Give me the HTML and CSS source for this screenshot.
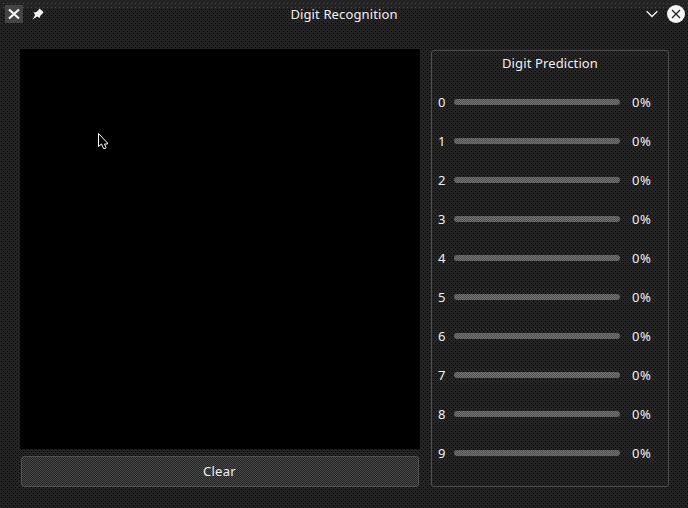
FILE: index.html
```html
<!DOCTYPE html>
<html lang="en">
<head>
<meta charset="utf-8">
<title>Digit Recognition</title>
<link rel="stylesheet" href="styles.css">
</head>
<body>
<div class="window">
  <header class="titlebar">
    <div class="tools">
      <svg class="app-icon" width="18" height="18" viewBox="0 0 18 18"><rect width="18" height="18" fill="#444"/><path d="M4 4.500l10 9M14 4.500l-10 9" stroke="#f4f4f4" stroke-width="2.200"/></svg>
      <svg class="pin" width="12" height="12" viewBox="0 0 12 12"><path d="M7.500 .5L11.500 4 10.500 5.500 8.500 7.500 7.500 10 5.300 8.500.5 11.500 3.200 7 1.500 4.500 4.500 4 6.500 2z" fill="#f4f4f4"/></svg>
    </div>
    <h1>Digit Recognition</h1>
    <div class="controls">
      <svg width="12" height="8" viewBox="0 0 12 8"><path d="M.7 1.200L6 6.500l5.300-5.300" fill="none" stroke="#f4f4f4" stroke-width="1.300"/></svg>
      <svg width="18" height="18" viewBox="0 0 18 18"><circle cx="9" cy="9" r="9" fill="#f4f4f4"/><path d="M5 5l8 8M13 5l-8 8" stroke="#222" stroke-width="1.300"/></svg>
    </div>
  </header>
  <main>
    <section class="left">
      <div class="board">
        <svg class="cursor" width="10" height="17" viewBox="0 0 10 17"><path d="M.5.500V13.500l3-2.500 2 4.500h2l.5-1-1.500-3.500h3v-1z" fill="#000" stroke="#fff"/></svg>
      </div>
      <button>Clear</button>
    </section>
    <section class="panel">
      <h2>Digit Prediction</h2>
      <div class="row"><span>0</span><i></i><b>0%</b></div>
      <div class="row"><span>1</span><i></i><b>0%</b></div>
      <div class="row"><span>2</span><i></i><b>0%</b></div>
      <div class="row"><span>3</span><i></i><b>0%</b></div>
      <div class="row"><span>4</span><i></i><b>0%</b></div>
      <div class="row"><span>5</span><i></i><b>0%</b></div>
      <div class="row"><span>6</span><i></i><b>0%</b></div>
      <div class="row"><span>7</span><i></i><b>0%</b></div>
      <div class="row"><span>8</span><i></i><b>0%</b></div>
      <div class="row"><span>9</span><i></i><b>0%</b></div>
    </section>
  </main>
</div>
</body>
</html>
```
FILE: styles.css
```css
* { box-sizing: border-box; margin: 0; }
body { background: #242424; }
.window {
  width: 688px; height: 508px; overflow: hidden;
  font: 13px/18px "Noto Sans", sans-serif; color: #f0f0f0;
  letter-spacing: .12px;
  background:
    conic-gradient(from 90deg at 3px 3px, #000 25%, transparent 0) 0 0 / 4px 4px,
    conic-gradient(from 90deg at 3px 3px, #000 25%, transparent 0) 2px 2px / 4px 4px,
    #242424;
}
.titlebar {
  display: grid; grid-template-columns: 1fr auto 1fr; align-items: center;
  height: 28px; padding: 0 3px 0 5px;
  background:
    conic-gradient(from 90deg at 3px 3px, #000 25%, transparent 0) 0 0 / 4px 4px,
    linear-gradient(#242424, #242424) 0 0 / 100% 9px no-repeat;
  position: relative;
}
.titlebar::before {
  content: ""; position: absolute; inset: 0 0 auto; height: 9px;
  background: conic-gradient(from 90deg at 3px 3px, #444 25%, transparent 0) 0 0 / 4px 4px;
}
.titlebar > * { position: relative; }
h1, h2 { font-size: 13px; font-weight: 400; text-align: center; }
h1 { margin-left: -2px; }
.tools, .controls { display: flex; align-items: center; }
.pin { margin-left: 9px; }
.controls { justify-content: flex-end; gap: 9px; }
main { display: flex; gap: 11px; padding: 21px 19px 0 20px; }
.left { width: 400px; }
.board { height: 400px; background: #000; position: relative; }
.cursor { position: absolute; left: 78px; top: 84px; }
button {
  display: block; width: 398px; height: 31px; margin: 7px 1px 0;
  font: inherit; letter-spacing: .3px; color: inherit; padding: 0 1px 2px 0;
  border: 1px solid #505050; border-radius: 3px;
  background: repeating-conic-gradient(#484848 0 25%, #242424 0 50%) 0 0 / 2px 2px;
}
.panel { width: 238px; height: 437px; margin-top: 1px; border: 1px solid #505050; border-radius: 3px; padding-top: 3px; }
.panel h2 { margin-bottom: 10px; }
.row { display: flex; align-items: center; height: 39px; padding: 0 14px 0 6px; }
.row span { width: 16px; }
.row i { width: 166px; height: 6px; border-radius: 3px; background: repeating-conic-gradient(#747474 0 25%, #505050 0 50%) 0 0 / 2px 2px; }
.row b { margin-left: 12px; font-weight: 400; letter-spacing: .5px; }
```
